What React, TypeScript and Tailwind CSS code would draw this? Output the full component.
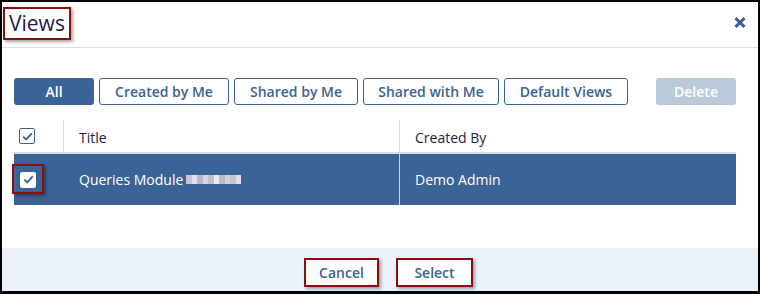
const blue = "#3b6396";

function Check({ filled }: { filled?: boolean }) {
  return (
    <span
      className={
        filled
          ? "flex h-[16px] w-[16px] items-center justify-center rounded-[2px] bg-white"
          : "flex h-[16px] w-[16px] items-center justify-center rounded-[2px] border border-[#3b6396] bg-white"
      }
    >
      <svg width="11" height="9" viewBox="0 0 11 9">
        <path d="M1.2 4.6 L4.2 7.4 L9.8 1.4" fill="none" stroke={blue} strokeWidth="1.9" />
      </svg>
    </span>
  );
}

export default function App() {
  const tabs = ["Created by Me", "Shared by Me", "Shared with Me", "Default Views"];
  const widths = ["w-[130px]", "w-[124px]", "w-[136px]", "w-[124px]"];
  const blur = ["#c9c6d6", "#e4e0ea", "#b9b7cc", "#d8d6e2", "#c2c0d3", "#eceaf1", "#bdbbcf", "#d3d1de", "#c6c4d6", "#e1dfe8"];
  return (
    <div className="flex h-[294px] w-[760px] flex-col border-2 border-b-[3px] border-black bg-white font-['Open_Sans',sans-serif]">
      <div className="flex h-[46px] shrink-0 items-start justify-between border-b border-[#d5dde8]">
        <div className="ml-[1px] mt-[5px] flex h-[33px] w-[68px] items-center border-2 border-[#900c0c] pl-[4px] shadow-[2px_2px_3px_rgba(0,0,0,0.35)]">
          <span className="text-[21px] font-medium leading-none text-[#1d1a4a]">Views</span>
        </div>
        <svg className="mr-[12px] mt-[15px]" width="12" height="11" viewBox="0 0 12 11">
          <path d="M1.5 1.2 L10.5 9.8 M10.5 1.2 L1.5 9.8" stroke={blue} strokeWidth="3" />
        </svg>
      </div>

      <div className="mt-[30px] flex items-center pl-[12px] pr-[22px]">
        <button className="h-[27px] w-[80px] rounded-[3px] bg-[#3b6396] text-[14px] font-semibold text-white">All</button>
        {tabs.map((t, i) => (
          <button
            key={t}
            className={`ml-[5px] h-[27px] ${widths[i]} rounded-[3px] border border-[#3b6396] bg-white text-[14px] font-semibold text-[#3b6396]`}
          >
            {t}
          </button>
        ))}
        <button className="ml-auto h-[27px] w-[80px] rounded-[3px] bg-[#b9cadb] text-[14px] font-semibold text-white">Delete</button>
      </div>

      <div className="ml-[12px] mr-[22px] mt-[15px]">
        <div className="flex h-[34px] border-b-2 border-[#d5dde8] text-[14px] text-[#1f1d3f]">
          <div className="flex w-[50px] items-center border-r border-[#d5dde8] pl-[5px]">
            <Check />
          </div>
          <div className="flex w-[336px] items-center border-r border-[#d5dde8] pl-[15px] pt-[2px]">Title</div>
          <div className="flex flex-1 items-center pl-[15px] pt-[2px]">Created By</div>
        </div>
        <div className="flex h-[51px] bg-[#3b6396] text-[14px] text-white">
          <div className="relative flex w-[50px] items-center pl-[6px]">
            <Check filled />
            <span className="absolute left-[-2px] top-[10px] h-[30px] w-[32px] border-2 border-[#900c0c] shadow-[2px_2px_3px_rgba(0,0,0,0.35)]" />
          </div>
          <div className="flex w-[336px] items-center border-r border-[#c9d5e4] pl-[15px]">
            <span>Queries Module</span>
            <span className="ml-[3px] flex h-[9px]">
              {blur.map((c, i) => (
                <span key={i} className="h-[9px] w-[5.5px]" style={{ background: c }} />
              ))}
            </span>
          </div>
          <div className="flex flex-1 items-center pl-[15px]">Demo Admin</div>
        </div>
      </div>

      <div className="mt-auto flex h-[43px] items-start justify-center bg-[#ebf2fa] pl-[17px] pt-[10px]">
        <button className="h-[29px] w-[75px] border-2 border-[#900c0c] bg-white text-[14px] font-semibold text-[#3b6396] shadow-[2px_2px_3px_rgba(0,0,0,0.35)]">
          Cancel
        </button>
        <button className="ml-[17px] h-[29px] w-[77px] border-2 border-[#900c0c] bg-white text-[14px] font-semibold text-[#3b6396] shadow-[2px_2px_3px_rgba(0,0,0,0.35)]">
          Select
        </button>
      </div>
    </div>
  );
}
